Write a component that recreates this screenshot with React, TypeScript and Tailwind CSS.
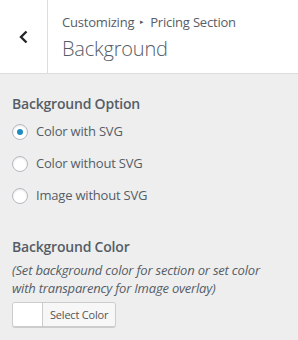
import React, { useState } from "react";

const options = ["Color with SVG", "Color without SVG", "Image without SVG"];

export default function App() {
  const [selected, setSelected] = useState(options[0]);

  return (
    <div
      className="w-[298px] h-[340px] bg-[#eeeeee] text-[#555d66] overflow-hidden tracking-[-0.2px]"
      style={{ fontFamily: '"Open Sans", "Noto Sans", sans-serif' }}
    >
      {/* Header */}
      <div className="flex h-[74px] bg-white border-b border-[#dddddd]">
        <button className="w-[48px] shrink-0 flex items-center justify-center border-r border-[#dddddd] text-[#23282d]">
          <svg width="16" height="16" viewBox="0 0 16 16" fill="none">
            <path d="M10.5 2.5 L5 8 L10.5 13.5" stroke="currentColor" strokeWidth="2.4" />
          </svg>
        </button>
        <div className="pl-[14px] pt-[12px]">
          <div className="text-[13px] leading-[20px] flex items-center">
            <span>Customizing</span>
            <span className="mx-[6px] text-[7px]">▸</span>
            <span>Pricing Section</span>
          </div>
          <div className="text-[20px] leading-[28px] font-light mt-[3px]">Background</div>
        </div>
      </div>

      {/* Background Option */}
      <div className="px-[12px] pt-[20px]">
        <div className="text-[14px] font-semibold leading-[20px] mb-[2px]">Background Option</div>
        <div className="flex flex-col">
          {options.map((o) => (
            <label key={o} className="flex items-center h-[32px] cursor-pointer" onClick={() => setSelected(o)}>
              <span className="w-[16px] h-[16px] rounded-full border border-[#b4b9be] bg-white flex items-center justify-center shadow-[inset_0_1px_2px_rgba(0,0,0,0.1)]">
                {selected === o && <span className="w-[6px] h-[6px] rounded-full bg-[#1e8cbe]" />}
              </span>
              <span className="ml-[8px] text-[13px]">{o}</span>
            </label>
          ))}
        </div>
      </div>

      {/* Background Color */}
      <div className="px-[12px] pt-[25px]">
        <div className="text-[14px] font-semibold leading-[20px]">Background Color</div>
        <div className="text-[13px] italic leading-[18px] mt-[4px]">
          (Set background color for section or set color with transparency for Image overlay)
        </div>
        <button className="mt-[5px] flex h-[25px] rounded-[3px] border border-[#cccccc] shadow-[0_1px_0_#cccccc] overflow-hidden">
          <span className="w-[30px] bg-white border-r border-[#cccccc]" />
          <span className="px-[7px] bg-[#f7f7f7] text-[11px] leading-[23px] text-[#555555]">Select Color</span>
        </button>
      </div>
    </div>
  );
}
